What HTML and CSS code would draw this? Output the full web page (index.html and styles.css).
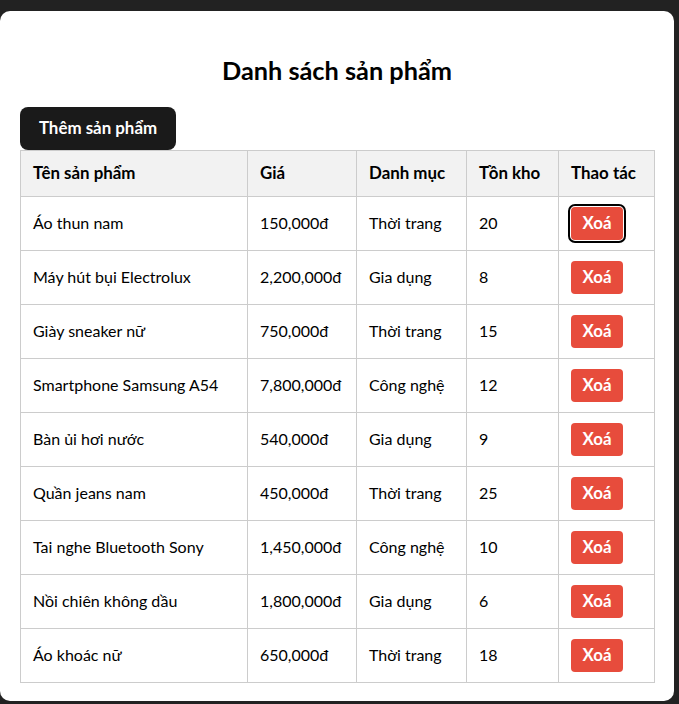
FILE: index.html
```html
<!DOCTYPE html>
<html lang="vi">
<head>
<meta charset="utf-8">
<title>Danh sách sản phẩm</title>
<link rel="stylesheet" href="styles.css">
</head>
<body>
<div class="card">
  <h2 class="title">Danh sách sản phẩm</h2>
  <div class="toolbar"><button class="add-btn">Thêm sản phẩm</button></div>
  <table class="products">
    <colgroup>
      <col class="c-name"><col class="c-price"><col class="c-cat"><col class="c-stock"><col class="c-act">
    </colgroup>
    <thead>
      <tr><th>Tên sản phẩm</th><th>Giá</th><th>Danh mục</th><th>Tồn kho</th><th>Thao tác</th></tr>
    </thead>
    <tbody>
      <tr><td>Áo thun nam</td><td>150,000đ</td><td>Thời trang</td><td>20</td><td class="act"><button class="del-btn focused">Xoá</button></td></tr>
      <tr><td>Máy hút bụi Electrolux</td><td>2,200,000đ</td><td>Gia dụng</td><td>8</td><td class="act"><button class="del-btn">Xoá</button></td></tr>
      <tr><td>Giày sneaker nữ</td><td>750,000đ</td><td>Thời trang</td><td>15</td><td class="act"><button class="del-btn">Xoá</button></td></tr>
      <tr><td>Smartphone Samsung A54</td><td>7,800,000đ</td><td>Công nghệ</td><td>12</td><td class="act"><button class="del-btn">Xoá</button></td></tr>
      <tr><td>Bàn ủi hơi nước</td><td>540,000đ</td><td>Gia dụng</td><td>9</td><td class="act"><button class="del-btn">Xoá</button></td></tr>
      <tr><td>Quần jeans nam</td><td>450,000đ</td><td>Thời trang</td><td>25</td><td class="act"><button class="del-btn">Xoá</button></td></tr>
      <tr><td>Tai nghe Bluetooth Sony</td><td>1,450,000đ</td><td>Công nghệ</td><td>10</td><td class="act"><button class="del-btn">Xoá</button></td></tr>
      <tr><td>Nồi chiên không dầu</td><td>1,800,000đ</td><td>Gia dụng</td><td>6</td><td class="act"><button class="del-btn">Xoá</button></td></tr>
      <tr><td>Áo khoác nữ</td><td>650,000đ</td><td>Thời trang</td><td>18</td><td class="act"><button class="del-btn">Xoá</button></td></tr>
    </tbody>
  </table>
</div>
</body>
</html>
```
FILE: styles.css
```css
html, body {
  margin: 0;
  padding: 0;
  background: #222222;
  font-family: "Lato", "Open Sans", sans-serif;
  color: #000;
}
body {
  padding-top: 11px;
}
.card {
  width: 674px;
  box-sizing: border-box;
  background: #ffffff;
  border-radius: 10px;
  padding: 20px 20px 18px 20px;
  min-height: 690px;
}
.title {
  margin: 0;
  height: 76px;
  display: flex;
  align-items: center;
  justify-content: center;
  font-size: 25.3px;
  font-weight: 700;
  padding-top: 2px;
  box-sizing: border-box;
}
.toolbar {
  display: flex;
}
.add-btn {
  width: 156px;
  height: 43px;
  background: #1a1a1a;
  color: #fff;
  border: none;
  border-radius: 8px;
  font-family: inherit;
  font-size: 16.9px;
  font-weight: 700;
  padding: 0 0 2px 0;
}
.products {
  width: 634px;
  border-collapse: collapse;
  table-layout: fixed;
  font-size: 16px;
}
.c-name { width: 227px; }
.c-price { width: 109px; }
.c-cat { width: 110px; }
.c-stock { width: 92px; }
.c-act { width: 96px; }
.products th, .products td {
  border: 1px solid #cccccc;
  text-align: left;
  padding: 0 12px;
  vertical-align: middle;
}
.products th {
  background: #f2f2f2;
  height: 43px;
  padding-bottom: 2px;
  font-size: 16.9px;
  font-weight: 700;
}
.products td {
  height: 50px;
  padding-bottom: 3px;
}
.products td.act {
  height: 53px;
  padding-bottom: 0;
}
.del-btn {
  background: #e74c3c;
  color: #fff;
  border: none;
  border-radius: 4px;
  width: 52px;
  height: 33px;
  font-family: inherit;
  font-size: 16.9px;
  font-weight: 700;
  padding: 0 0 2px 0;
  display: block;
}
.del-btn.focused {
  outline: 2px solid #000;
  outline-offset: 1px;
}
```
